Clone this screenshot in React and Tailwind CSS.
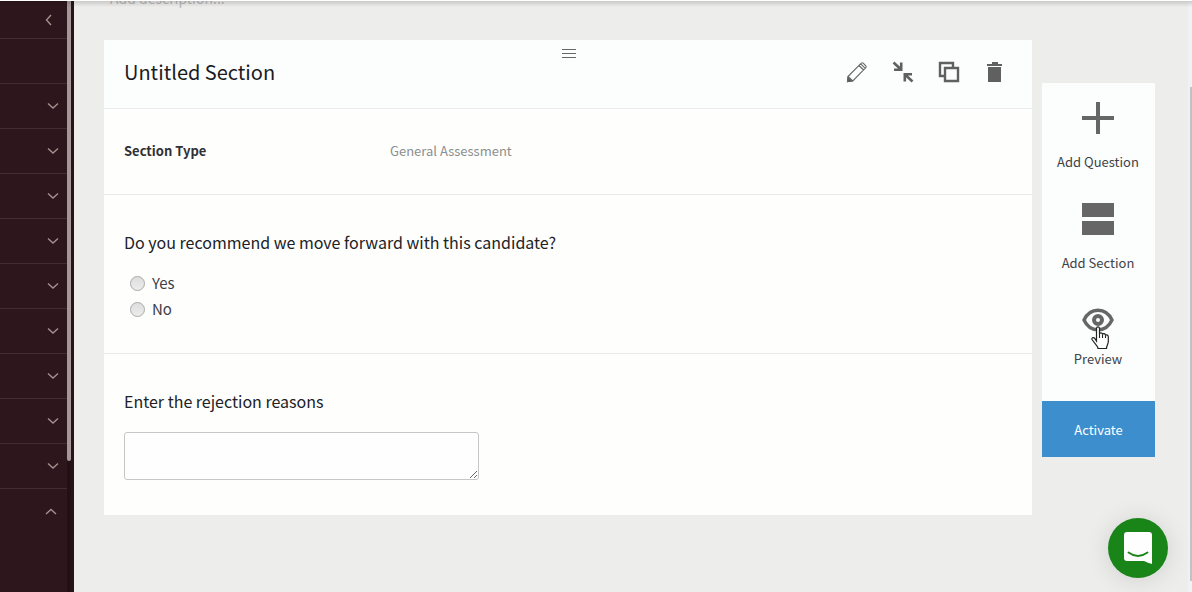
import React from "react";

const menuRows = ["Jobs", "Candidates", "Interviews", "Assessments", "Offers", "Reports", "Templates", "Team", "Integrations"];

function Chevron({ d }) {
  return (
    <svg className="w-3 h-3" viewBox="0 0 12 12" fill="none" stroke="#a3928f" strokeWidth="1.4">
      <path d={d} />
    </svg>
  );
}

function Sidebar() {
  return (
    <aside className="flex w-[74px] shrink-0 bg-[#2e171c]">
      <nav className="flex-1">
        <div className="flex h-[39px] items-center justify-end border-b border-[#432c34] pr-3 pt-0.5">
          <button aria-label="Collapse menu">
            <Chevron d="M8 1 3.500 6 8 11" />
          </button>
        </div>
        <div className="h-[45px] border-b border-[#432c34]" />
        {menuRows.map((row) => (
          <div key={row} className="flex h-[45px] items-center justify-end border-b border-[#432c34] pr-2">
            <button aria-label={row}>
              <Chevron d="M1 3.500 6 8 11 3.500" />
            </button>
          </div>
        ))}
        <div className="flex h-[45px] items-center justify-end pr-[10px]">
          <button aria-label="Settings">
            <Chevron d="M1 8 6 3.500 11 8" />
          </button>
        </div>
      </nav>
      <div className="w-1 bg-[#211115]">
        <div className="h-[461px] rounded-b-sm bg-[#a3979a]" />
      </div>
      <div className="w-[3px] bg-[#2a1318]" />
    </aside>
  );
}

function SectionHeader() {
  return (
    <header className="relative flex h-[69px] items-center justify-between border-b border-[#e8ecef] bg-[#fbfefd] px-5 pb-[5px]">
      <h2 className="text-[20px] leading-6 text-[#1b1b1f]">Untitled Section</h2>
      <button aria-label="Drag section" className="absolute inset-x-0 top-2 mx-auto flex w-4 justify-end">
        <svg className="h-3 w-[14px]" viewBox="0 0 14 12" stroke="#666" strokeWidth="1">
          <path d="M0 1.500h14M0 5.500h14M0 9.500h14" />
        </svg>
      </button>
      <div className="flex items-center gap-[22px] pr-[5px]">
        <button aria-label="Edit section">
          <svg className="h-6 w-6" viewBox="0 0 24 24" fill="none" stroke="#666" strokeWidth="1.100">
            <path d="M3 16.500 16.300 3.200Q17.200 2.300 18.200 3.200L20.800 5.800Q21.700 6.700 20.800 7.700L7.800 21 2.500 21.700ZM14 5.500l4.500 4.500M15.700 3.800l4.500 4.500M3 16.500 7.800 21" />
            <path d="M3 17.500 6.800 21.200 2.500 21.700Z" fill="#555" />
          </svg>
        </button>
        <button aria-label="Collapse section">
          <svg className="h-6 w-6" viewBox="0 0 24 24" fill="none" stroke="#606060" strokeWidth="2.600">
            <path d="M2.500 2.500 9.500 9M10.200 2.500V9.800H3M21.500 21.500 14.500 15M13.800 21.500V14.200H21" />
          </svg>
        </button>
        <button aria-label="Duplicate section">
          <svg className="h-6 w-6" viewBox="0 0 24 24" fill="none" stroke="#606060" strokeWidth="2.400">
            <path d="M8 16H3V3H16V7M8 8H21V21H8Z" />
          </svg>
        </button>
        <button aria-label="Delete section">
          <svg className="h-6 w-6" viewBox="0 0 24 24" fill="#606060">
            <path d="M9 2h6v2h4v2H4V4h5ZM5 7h13v15H5Z" />
          </svg>
        </button>
      </div>
    </header>
  );
}

function RadioOption({ label }) {
  return (
    <label className="flex h-[26px] items-center gap-[7px] text-[15px] leading-5 text-[#3d4045]">
      <input
        type="radio"
        name="recommend"
        className="h-[15px] w-[15px] appearance-none rounded-full border border-[#a9a9a9] bg-linear-to-b from-[#dedede] to-[#ececec] checked:border-4"
      />
      {label}
    </label>
  );
}

function SectionCard() {
  return (
    <section className="min-w-0 flex-1 bg-[#fefefd]">
      <SectionHeader />
      <div className="flex h-[86px] items-center border-b border-[#ebebee] px-5 pb-0.5 text-[13px] leading-5">
        <span className="w-[266px] font-bold text-[#2f3136]">Section Type</span>
        <span className="text-[#8b8e90]">General Assessment</span>
      </div>
      <fieldset className="h-[159px] border-b border-[#ebebee] px-5 pt-[35px]">
        <legend className="float-left w-full text-[16px] leading-6 text-[#202226]">
          Do you recommend we move forward with this candidate?
        </legend>
        <div className="clear-both pl-[6px] pt-4">
          <RadioOption label="Yes" />
          <RadioOption label="No" />
        </div>
      </fieldset>
      <div className="px-5 py-[35px]">
        <label htmlFor="reasons" className="block text-[16px] leading-6 text-[#202226]">
          Enter the rejection reasons
        </label>
        <textarea
          id="reasons"
          className="mt-[19px] block h-12 w-[355px] resize rounded-[3px] border border-[#c6c6c6] bg-[#fefefe] p-2"
        />
      </div>
    </section>
  );
}

function HandCursor() {
  return (
    <svg className="absolute left-[49px] top-[41px] h-6 w-[18px]" viewBox="0 0 18 24">
      <path
        d="M5.500 15V2.500C5.500.3 8.500.3 8.500 2.500V8C8.500 6.500 11.500 6.500 11.500 8.500 12 7 14.500 7.500 14.500 9.500 15 8.300 17.300 8.600 17.300 10.800V15.500C17.300 18 15.500 19.500 15.500 22.500H7C7 20 3.500 17.500 1 13.500.2 12 2.500 10.700 3.900 12.600Z"
        fill="#fff"
        stroke="#222"
        strokeWidth="1.200"
      />
      <path d="M8.500 8v4M11.500 8.500V12M14.500 9.500V12" stroke="#222" strokeWidth="1.100" />
    </svg>
  );
}

function Toolbox() {
  return (
    <aside className="mt-[43px] w-[113px] shrink-0 bg-[#fbfefd] text-[13px] leading-5 text-[#3f4246]">
      <button className="flex h-[101px] w-full flex-col items-center pr-px pt-[18px]">
        <svg className="h-[34px] w-8" viewBox="0 0 32 34" fill="#666">
          <path d="M14 1h4v14h14v4H18v14h-4V19H0v-4h14Z" />
        </svg>
        <span className="mt-[17px]">Add Question</span>
      </button>
      <button className="flex h-[101px] w-full flex-col items-center pr-px pt-[18px]">
        <svg className="h-[34px] w-8" viewBox="0 0 32 34" fill="#666">
          <path d="M0 1h32v14H0ZM0 19h32v14H0Z" />
        </svg>
        <span className="mt-[17px]">Add Section</span>
      </button>
      <button className="relative flex h-[116px] w-full flex-col items-center pr-px pt-[23px]">
        <svg className="h-6 w-8" viewBox="0 0 32 24" fill="none" stroke="#666">
          <path d="M2 12C5 5.500 10 2.200 16 2.200S27 5.500 30 12C27 18.500 22 21.800 16 21.800S5 18.500 2 12Z" strokeWidth="3.400" />
          <circle cx="16" cy="12" r="4" strokeWidth="4" />
        </svg>
        <span className="mt-[17px]">Preview</span>
        <HandCursor />
      </button>
      <button className="block h-14 w-full bg-[#3d8ecd] pt-0.5 text-white">Activate</button>
    </aside>
  );
}

export default function App() {
  return (
    <div className="relative flex h-screen overflow-hidden bg-[#ededec] font-['Noto_Sans_CJK_SC','Noto_Sans',sans-serif]">
      <Sidebar />
      <main className="min-w-0 flex-1 pl-[30px] pr-[33px]">
        <div className="flex h-2 items-end pl-[6px]">
          <p className="text-[14px] leading-5 text-[#b9b9b9]">Add description...</p>
        </div>
        <div className="flex items-start gap-[10px] pt-8">
          <SectionCard />
          <Toolbox />
        </div>
      </main>
      <div className="w-1 bg-[#f1f1f4] pl-[2px] pt-[87px]">
        <div className="h-[494px] bg-[#c2c2c2]" />
      </div>
      <div className="absolute inset-x-0 top-0 h-[7px] border-t border-white bg-linear-to-b from-black/15 to-transparent" />
      <button
        aria-label="Open chat"
        className="absolute bottom-[14px] right-6 flex h-[60px] w-[60px] items-center justify-center rounded-full bg-[#198518] shadow-[0_2px_24px_rgba(0,0,0,0.12)]"
      >
        <svg className="h-8 w-7" viewBox="0 0 28 32" fill="none">
          <path d="M3 0h22q3 0 3 3v29q-4-1-8-3H3q-3 0-3-3V3q0-3 3-3Z" fill="#fefefe" />
          <path d="M4.500 20.500q9.500 7 19 0" stroke="#198518" strokeWidth="1.800" strokeLinecap="round" />
        </svg>
      </button>
    </div>
  );
}
